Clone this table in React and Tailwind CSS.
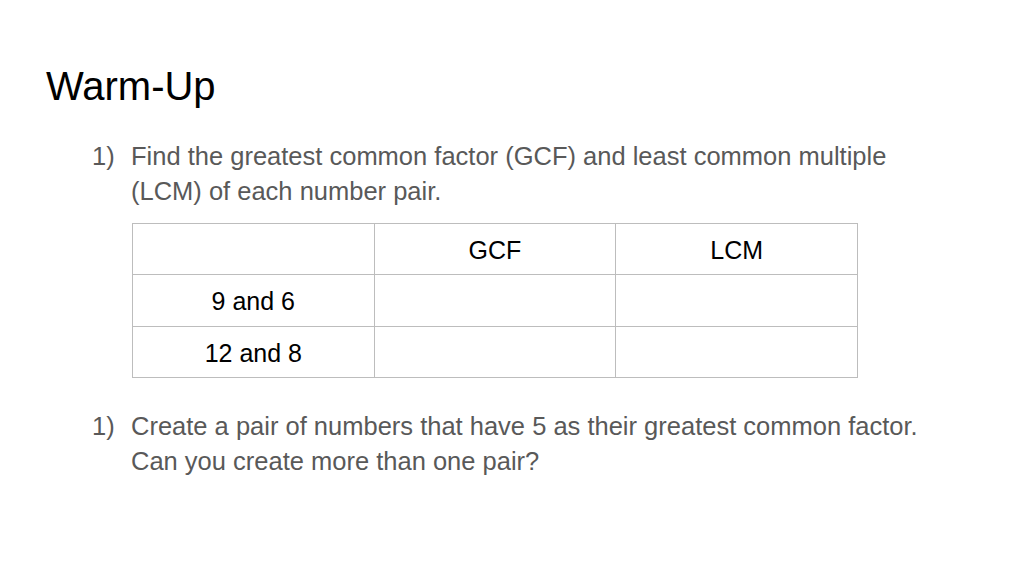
import React from "react";

const rows = [
  ["", "GCF", "LCM"],
  ["9 and 6", "", ""],
  ["12 and 8", "", ""],
];

const Item = ({ children }) => (
  <div className="flex text-[25.5px] leading-[35px] text-[#595959]">
    <span className="w-[39px] shrink-0">1)</span>
    <span>{children}</span>
  </div>
);

export default function App() {
  return (
    <div
      className="w-[1024px] h-[576px] bg-white overflow-hidden"
      style={{ fontFamily: '"Liberation Sans", Arial, sans-serif' }}
    >
      <h1 className="pl-[46px] pt-[62px] text-[40px] leading-[48px] text-black">Warm-Up</h1>
      <div className="pl-[92px] mt-[29px] w-[1000px]">
        <Item>
          Find the greatest common factor (GCF) and least common multiple
          <br />
          (LCM) of each number pair.
        </Item>
      </div>
      <div className="ml-[132px] mt-[14px] w-[726px]">
        <table className="w-full border-collapse table-fixed">
          <tbody>
            {rows.map((r, i) => (
              <tr key={i} className="h-[51.4px]">
                {r.map((c, j) => (
                  <td
                    key={j}
                    className="border border-[#bdbdbd] text-center text-[25px] text-black p-0 pt-[3px]"
                  >
                    {c}
                  </td>
                ))}
              </tr>
            ))}
          </tbody>
        </table>
      </div>
      <div className="pl-[92px] mt-[31px] w-[1000px]">
        <Item>
          Create a pair of numbers that have 5 as their greatest common factor.
          <br />
          Can you create more than one pair?
        </Item>
      </div>
    </div>
  );
}
